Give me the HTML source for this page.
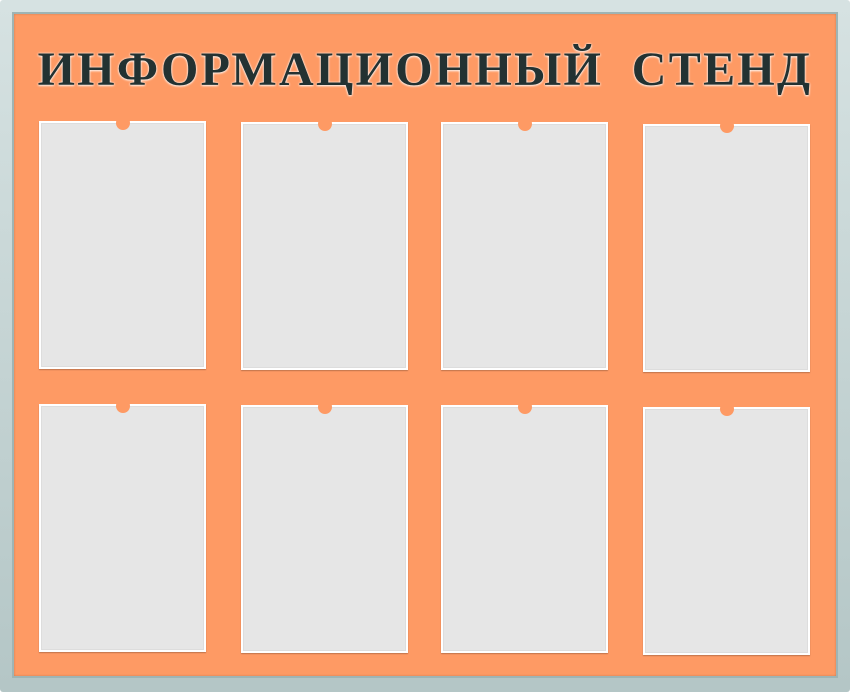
<!DOCTYPE html>
<html><head><meta charset="utf-8"><style>
html,body{margin:0;padding:0;width:850px;height:692px;overflow:hidden;background:#fff}
.frame{position:absolute;left:0;top:0;width:850px;height:692px;box-sizing:border-box;
background:linear-gradient(#d6e2e2,#b4c6c6);border-radius:3px}
.inner{position:absolute;left:14px;top:14px;width:822px;height:662px;background:#fe9a64;
box-shadow:0 0 0 2px #9fb4b4, inset 0 0 2px rgba(0,0,0,.2)}
.t{position:absolute;left:0;top:40px;width:850px;text-align:center;
font-family:"Liberation Serif",serif;font-weight:bold;font-size:48px;letter-spacing:2.3px;
color:#233232;text-shadow:0 0 2px #fff,0 1px 2px rgba(255,255,255,.8);white-space:nowrap;line-height:60px}
.p{position:absolute;width:167px;height:248px;background:#e6e6e6;box-sizing:border-box;
border:2px solid #fff;box-shadow:0 1px 1px rgba(0,0,0,.25),inset 0 0 0 1px #ddd}
.p::after{content:"";position:absolute;left:50%;top:-7px;margin-left:-7px;width:14px;height:14px;border-radius:50%;background:#fe9a64}
</style></head><body>
<div class="frame"></div>
<div class="inner"></div>
<div class="t">ИНФОРМАЦИОННЫЙ&nbsp; СТЕНД</div>
<div class="p" style="left:39px;top:121px"></div>
<div class="p" style="left:241px;top:122px"></div>
<div class="p" style="left:441px;top:122px"></div>
<div class="p" style="left:643px;top:124px"></div>
<div class="p" style="left:39px;top:404px"></div>
<div class="p" style="left:241px;top:405px"></div>
<div class="p" style="left:441px;top:405px"></div>
<div class="p" style="left:643px;top:407px"></div>
</body></html>
